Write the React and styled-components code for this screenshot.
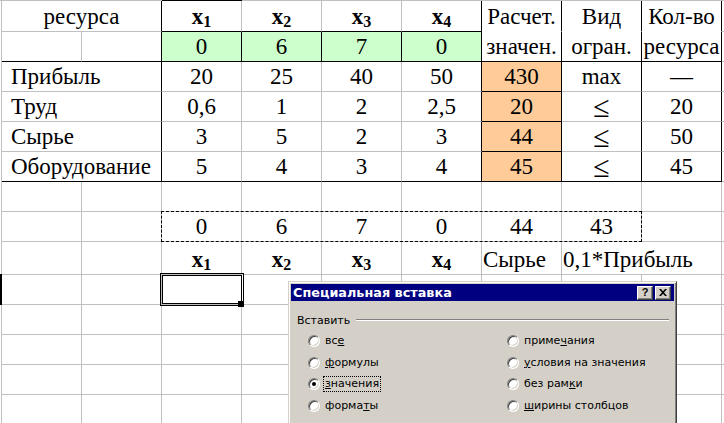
import React from 'react';
import styled, { createGlobalStyle } from 'styled-components';

const K = '#000';
const G = '#c0c0c0';
const GREEN = '#ccffcc';
const ORANGE = '#ffcc99';
const SERIF = '"Liberation Serif", "Times New Roman", serif';

const GlobalStyle = createGlobalStyle`
  html, body { margin: 0; padding: 0; background: #fff; overflow: hidden; }
  body { width: 724px; height: 423px; }
`;

const Page = styled.div`
  position: relative;
  width: 724px;
  height: 423px;
  overflow: hidden;
  background: #fff;
`;

const Sheet = styled.div`
  display: grid;
  grid-template-columns: repeat(10, 80px);
  grid-template-rows: 31px 30px repeat(6, 30px) 33px repeat(5, 30px);
  padding-left: 2px;
  border-top: 1px solid ${G};
  font-family: ${SERIF};
  font-size: 23px;
  color: #000;
  background-image: linear-gradient(#000, #000), linear-gradient(${G}, ${G});
  background-position: 0 273px, 1px 0;
  background-size: 2px 31px, 1px 100%;
  background-repeat: no-repeat;
`;

const Cell = styled.div`
  position: relative;
  grid-column: span ${(p) => p.$span || 1};
  border-right: 1px solid ${(p) => p.$r || G};
  border-bottom: 1px solid ${(p) => p.$b || G};
  background: ${(p) => p.$bg || 'transparent'};
  box-shadow: ${(p) => (p.$top ? '0 -1px 0 #000' : 'none')};
  display: flex;
  align-items: flex-end;
  justify-content: ${(p) => (p.$left ? 'flex-start' : 'center')};
  padding-left: ${(p) => p.$indent || 0}px;
  padding-bottom: 1px;
  font-family: ${SERIF};
  font-size: 23px;
  line-height: 26px;
  white-space: nowrap;
  min-width: 0;
`;

const Var = styled.span`
  font-weight: bold;
  sub {
    font-size: 16px;
    vertical-align: -3px;
    line-height: 0;
  }
`;

const Sym = styled.span`
  font-size: 30px;
  line-height: 26px;
`;

const Ants = styled.div`
  position: absolute;
  left: -1px;
  top: -1px;
  width: 481px;
  height: 31px;
  box-sizing: border-box;
  border: 1px dashed #000;
  z-index: 1;
  pointer-events: none;
`;

const Selection = styled.div`
  position: absolute;
  left: -2px;
  top: -2px;
  width: 84px;
  height: 33px;
  box-sizing: border-box;
  border: 3px double #000;
  z-index: 2;
`;

const FillHandle = styled.div`
  position: absolute;
  left: 75px;
  top: 25px;
  width: 6px;
  height: 6px;
  background: #000;
`;

const Dialog = styled.div`
  position: absolute;
  left: 288px;
  top: 281px;
  width: 389px;
  height: 160px;
  box-sizing: border-box;
  background: #d4d0c8;
  border: 1px solid;
  border-color: #d4d0c8 #404040 #404040 #d4d0c8;
  box-shadow: inset 1px 1px 0 #fff, inset -1px -1px 0 #808080;
  padding: 2px;
  font-family: "DejaVu Sans", "Liberation Sans", sans-serif;
  color: #000;
  z-index: 5;
`;

const TitleBar = styled.div`
  height: 17px;
  background: #000080;
  display: flex;
  align-items: center;
  padding: 0 3px 0 2px;
  color: #fff;
  font-weight: bold;
  font-size: 12.8px;
`;

const TitleText = styled.div`
  flex: 1;
  white-space: nowrap;
`;

const TitleButtons = styled.div`
  display: flex;
  gap: 2px;
`;

const TitleButton = styled.div`
  width: 16px;
  height: 14px;
  box-sizing: border-box;
  background: #d4d0c8;
  border: 1px solid;
  border-color: #fff #404040 #404040 #fff;
  box-shadow: inset -1px -1px 0 #808080;
  display: flex;
  align-items: center;
  justify-content: center;
  color: #000;
  font-family: "Liberation Sans", sans-serif;
  font-weight: bold;
  font-size: 11px;
  line-height: 1;
`;

const Body = styled.div`
  padding: 12px 5px 0 6px;
  font-size: 11px;
`;

const GroupHeader = styled.div`
  display: flex;
  align-items: center;
  height: 14px;
`;

const GroupLine = styled.div`
  flex: 1;
  margin-left: 6px;
  border-top: 1px solid #808080;
  border-bottom: 1px solid #fff;
`;

const Options = styled.div`
  display: grid;
  grid-template-columns: 199px 1fr;
  grid-auto-rows: 21.7px;
  padding: 3px 0 0 11px;
  align-items: center;
`;

const Option = styled.div`
  display: flex;
  align-items: center;
  gap: 3px;
`;

const Radio = styled.span`
  position: relative;
  width: 12px;
  height: 12px;
  box-sizing: border-box;
  border-radius: 50%;
  background: #fff;
  border: 1px solid;
  border-color: #808080 #fff #fff #808080;
  box-shadow: inset 1px 1px 0 #404040, inset -1px -1px 0 #d4d0c8;
  flex: none;
  &::after {
    content: '';
    display: ${(p) => (p.$checked ? 'block' : 'none')};
    position: absolute;
    left: 3px;
    top: 3px;
    width: 4px;
    height: 4px;
    border-radius: 50%;
    background: #000;
  }
`;

const Label = styled.span`
  padding: 0 1px;
  border: 1px dotted ${(p) => (p.$focus ? '#000' : 'transparent')};
  line-height: 14px;
  white-space: nowrap;
  u { text-decoration: underline; text-underline-offset: 1px; }
`;

const X = ({ n }) => (
  <Var>
    x<sub>{n}</sub>
  </Var>
);

const LE = <Sym>≤</Sym>;

const rows = [
  [
    { span: 2, c: 'ресурса', r: K },
    { c: <X n={1} />, b: K, top: true },
    { c: <X n={2} />, b: K },
    { c: <X n={3} />, b: K },
    { c: <X n={4} />, b: K, r: K },
    { c: 'Расчет.', r: K, b: 'transparent' },
    { c: 'Вид', r: K, b: 'transparent' },
    { c: 'Кол-во', r: K, b: 'transparent' },
    {},
  ],
  [
    { b: K },
    { r: K, b: K },
    { c: '0', bg: GREEN, r: K, b: K },
    { c: '6', bg: GREEN, r: K, b: K },
    { c: '7', bg: GREEN, r: K, b: K },
    { c: '0', bg: GREEN, r: K, b: K },
    { c: 'значен.', r: K, b: K },
    { c: 'огран.', r: K, b: K },
    { c: 'ресурса', r: K, b: K },
    {},
  ],
];

const body = [
  ['Прибыль', '20', '25', '40', '50', '430', 'max', '—'],
  ['Труд', '0,6', '1', '2', '2,5', '20', LE, '20'],
  ['Сырье', '3', '5', '2', '3', '44', LE, '50'],
  ['Оборудование', '5', '4', '3', '4', '45', LE, '45'],
];

body.forEach((d, i) => {
  const last = i === body.length - 1;
  const bb = last ? K : G;
  rows.push([
    { span: 2, c: d[0], left: true, indent: 9, r: K, b: bb },
    { c: d[1], b: bb },
    { c: d[2], b: bb },
    { c: d[3], b: bb },
    { c: d[4], r: K, b: bb },
    { c: d[5], bg: ORANGE, r: K, b: K },
    { c: d[6], r: K, b: bb },
    { c: d[7], r: K, b: bb },
    {},
  ]);
});

const empty = () => Array.from({ length: 10 }, () => ({}));

rows.push(empty());
rows.push([
  {},
  {},
  { c: '0', ants: true },
  { c: '6' },
  { c: '7' },
  { c: '0' },
  { c: '44' },
  { c: '43' },
  {},
  {},
]);
rows.push([
  {},
  {},
  { c: <X n={1} /> },
  { c: <X n={2} /> },
  { c: <X n={3} /> },
  { c: <X n={4} /> },
  { c: 'Сырье', left: true, indent: 1 },
  { c: '0,1*Прибыль', left: true, indent: 1, span: 2 },
  {},
]);
rows.push([{}, {}, { sel: true }, {}, {}, {}, {}, {}, {}, {}]);
for (let i = 0; i < 4; i++) rows.push(empty());

const options = [
  [<>вс<u>е</u></>, false],
  [<>приме<u>ч</u>ания</>, false],
  [<><u>ф</u>ормулы</>, false],
  [<><u>у</u>словия на значения</>, false],
  [<><u>з</u>начения</>, true],
  [<>без рам<u>к</u>и</>, false],
  [<>форма<u>т</u>ы</>, false],
  [<><u>ш</u>ирины столбцов</>, false],
];

export default function App() {
  return (
    <Page>
      <GlobalStyle />
      <Sheet>
        {rows.map((row, ri) =>
          row.map((cell, ci) => (
            <Cell
              key={`${ri}-${ci}`}
              $span={cell.span}
              $r={cell.r}
              $b={cell.b}
              $bg={cell.bg}
              $top={cell.top}
              $left={cell.left}
              $indent={cell.indent}
            >
              {cell.c}
              {cell.ants && <Ants />}
              {cell.sel && (
                <Selection>
                  <FillHandle />
                </Selection>
              )}
            </Cell>
          ))
        )}
      </Sheet>
      <Dialog>
        <TitleBar>
          <TitleText>Специальная вставка</TitleText>
          <TitleButtons>
            <TitleButton>?</TitleButton>
            <TitleButton>
              <svg width="8" height="7" viewBox="0 0 8 7">
                <path d="M0 0h2l2 2.2L6 0h2L5 3.5 8 7H6L4 4.8 2 7H0l3-3.5z" fill="#000" />
              </svg>
            </TitleButton>
          </TitleButtons>
        </TitleBar>
        <Body>
          <GroupHeader>
            Вставить
            <GroupLine />
          </GroupHeader>
          <Options>
            {options.map(([label, checked], i) => (
              <Option key={i}>
                <Radio $checked={checked} />
                <Label $focus={checked}>{label}</Label>
              </Option>
            ))}
          </Options>
        </Body>
      </Dialog>
    </Page>
  );
}
